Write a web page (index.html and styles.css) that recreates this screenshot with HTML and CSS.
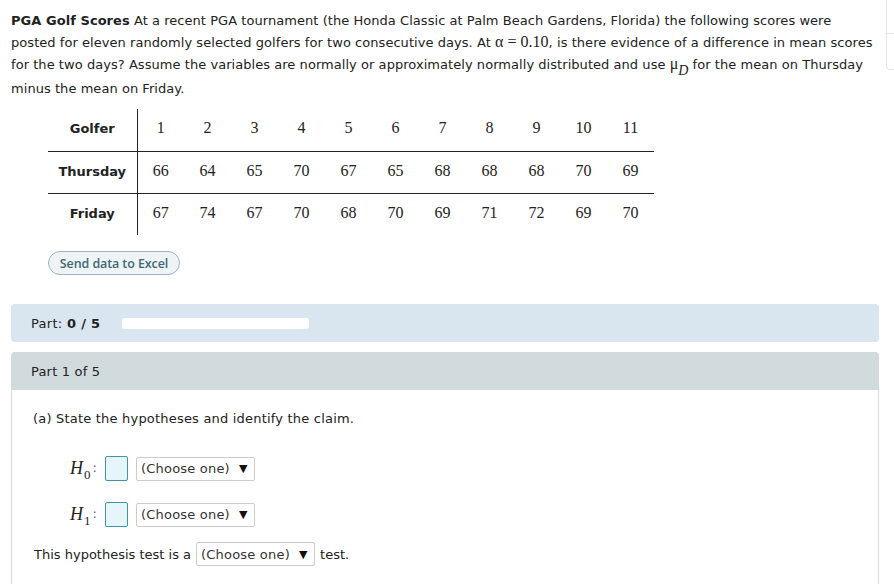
FILE: index.html
```html
<!DOCTYPE html>
<html>
<head>
<meta charset="utf-8">
<link rel="stylesheet" href="styles.css">
</head>
<body>
<div class="edge-box"><div class="edge-top"></div></div>
<div class="page">
  <p class="intro"><b>PGA Golf Scores</b> At a recent PGA tournament (the Honda Classic at Palm Beach Gardens, Florida) the following scores were posted for eleven randomly selected golfers for two consecutive days. At <span class="math">α</span> <span class="math num">= 0.10</span>, is there evidence of a difference in mean scores for the two days? Assume the variables are normally or approximately normally distributed and use <span class="math">μ<sub class="sub">D</sub></span> for the mean on Thursday minus the mean on Friday.</p>

  <table class="data">
    <tr>
      <th>Golfer</th>
      <td>1</td><td>2</td><td>3</td><td>4</td><td>5</td><td>6</td><td>7</td><td>8</td><td>9</td><td>10</td><td>11</td>
    </tr>
    <tr class="mid">
      <th>Thursday</th>
      <td>66</td><td>64</td><td>65</td><td>70</td><td>67</td><td>65</td><td>68</td><td>68</td><td>68</td><td>70</td><td>69</td>
    </tr>
    <tr>
      <th>Friday</th>
      <td>67</td><td>74</td><td>67</td><td>70</td><td>68</td><td>70</td><td>69</td><td>71</td><td>72</td><td>69</td><td>70</td>
    </tr>
  </table>

  <div class="btn-row"><span class="excel-btn">Send data to Excel</span></div>

  <div class="progress">
    <span class="plabel">Part: <b>0 / 5</b></span>
    <span class="track"></span>
  </div>

  <div class="part">
    <div class="part-head">Part 1 of 5</div>
    <div class="part-body">
      <p class="question">(a) State the hypotheses and identify the claim.</p>
      <div class="hyp">
        <span class="hlabel"><i>H</i><sub>0</sub><span class="colon">:</span></span>
        <span class="ans"></span>
        <span class="select">(Choose one) <span class="arrow">▼</span></span>
      </div>
      <div class="hyp">
        <span class="hlabel"><i>H</i><sub>1</sub><span class="colon">:</span></span>
        <span class="ans"></span>
        <span class="select">(Choose one) <span class="arrow">▼</span></span>
      </div>
      <div class="test-line">This hypothesis test is a <span class="select">(Choose one) <span class="arrow">▼</span></span> test.</div>
    </div>
  </div>
</div>
</body>
</html>
```

FILE: styles.css
```css
html, body {
  margin: 0;
  padding: 0;
  background: #fff;
}
body {
  font-family: "DejaVu Sans", Verdana, sans-serif;
  font-size: 13px;
  color: #222;
  width: 894px;
  height: 584px;
  overflow: hidden;
  position: relative;
}
.page {
  padding: 10px 15px 0 11px;
}
.intro {
  margin: 0;
  line-height: 21px;
  letter-spacing: 0.05px;
}
.intro b {
  font-weight: bold;
}
.math {
  font-family: "Liberation Serif", "Times New Roman", serif;
  font-size: 16px;
  letter-spacing: 0;
}
.sub {
  font-style: italic;
  font-size: 14px;
  vertical-align: -6px;
  line-height: 14px;
}
.data {
  border-collapse: collapse;
  margin: 10px 0 0 37px;
}
.data th {
  font-family: "DejaVu Sans", Verdana, sans-serif;
  font-weight: bold;
  font-size: 13px;
  width: 89px;
  height: 42px;
  padding: 0 0 2px 0;
  text-align: center;
  border-right: 1px solid #222;
  box-sizing: border-box;
}
.data td {
  font-family: "Liberation Serif", "Times New Roman", serif;
  font-size: 16px;
  width: 47px;
  height: 42px;
  padding: 0 0 3px 0;
  text-align: center;
  color: #222;
  box-sizing: border-box;
}
.data tr.mid th, .data tr.mid td {
  border-top: 1.5px solid #222;
  border-bottom: 1.5px solid #222;
}
.btn-row {
  margin: 16px 0 0 37px;
  display: flex;
}
.excel-btn {
  display: inline-flex;
  align-items: center;
  justify-content: center;
  box-sizing: border-box;
  width: 132px;
  height: 24px;
  border: 1px solid #9fb2ba;
  border-radius: 12px;
  background: #eef3f5;
  color: #3f6876;
  font-family: "Open Sans", Lato, sans-serif;
  font-weight: 600;
  font-size: 12.5px;
  letter-spacing: -0.1px;
}
.progress {
  margin-top: 29px;
  height: 38px;
  background: #dae6ef;
  border-radius: 4px;
  display: flex;
  align-items: center;
  padding-left: 20px;
  gap: 22px;
}
.plabel {
  letter-spacing: 0.3px;
}
.progress b {
  font-weight: bold;
}
.track {
  display: inline-block;
  width: 187px;
  height: 11px;
  background: #fff;
  border-radius: 3px;
}
.part {
  margin-top: 10px;
}
.part-head {
  height: 38px;
  background: #d1dadd;
  border-radius: 4px 4px 0 0;
  display: flex;
  align-items: center;
  padding-left: 20px;
  letter-spacing: 0.2px;
}
.part-body {
  border-left: 1px solid #d4dadd;
  border-right: 1px solid #d4dadd;
  height: 194px;
  box-sizing: border-box;
  padding: 19px 0 0 21px;
}
.question {
  margin: 0 0 27px 0;
  line-height: 20px;
  letter-spacing: 0.2px;
}
.hyp {
  display: flex;
  align-items: center;
  margin: 0 0 21px 37px;
  height: 25px;
}
.hlabel {
  font-family: "Liberation Serif", "Times New Roman", serif;
  font-size: 18px;
  width: 35px;
  display: inline-block;
  color: #222;
  white-space: nowrap;
}
.hlabel sub {
  font-size: 13px;
  vertical-align: -5px;
  line-height: 0;
  margin-left: 1px;
}
.colon {
  font-family: "DejaVu Sans", sans-serif;
  font-size: 13px;
  margin-left: 2px;
  color: #555;
  vertical-align: 2px;
}
.ans {
  display: inline-block;
  box-sizing: border-box;
  width: 23px;
  height: 25px;
  border: 1px solid #3c95a6;
  border-radius: 2px;
  background: #e6f5f9;
  margin-right: 8px;
}
.select {
  display: inline-flex;
  align-items: center;
  box-sizing: border-box;
  width: 119px;
  height: 24px;
  border: 1px solid #ccc;
  border-radius: 2px;
  padding-left: 4px;
  color: #333;
  background: #fff;
  letter-spacing: 0.2px;
}
.arrow {
  font-size: 11px;
  margin-left: 9px;
  color: #111;
}
.test-line {
  display: flex;
  align-items: center;
  gap: 5px;
  margin-top: -6px;
  padding-left: 1px;
}
.edge-box {
  position: absolute;
  left: 886px;
  top: -4px;
  width: 20px;
  height: 74px;
  border: 1px solid #e2e6e8;
  border-radius: 4px;
  box-sizing: border-box;
}
.edge-top {
  margin-top: 36px;
  border-top: 1px solid #e2e6e8;
}
```
